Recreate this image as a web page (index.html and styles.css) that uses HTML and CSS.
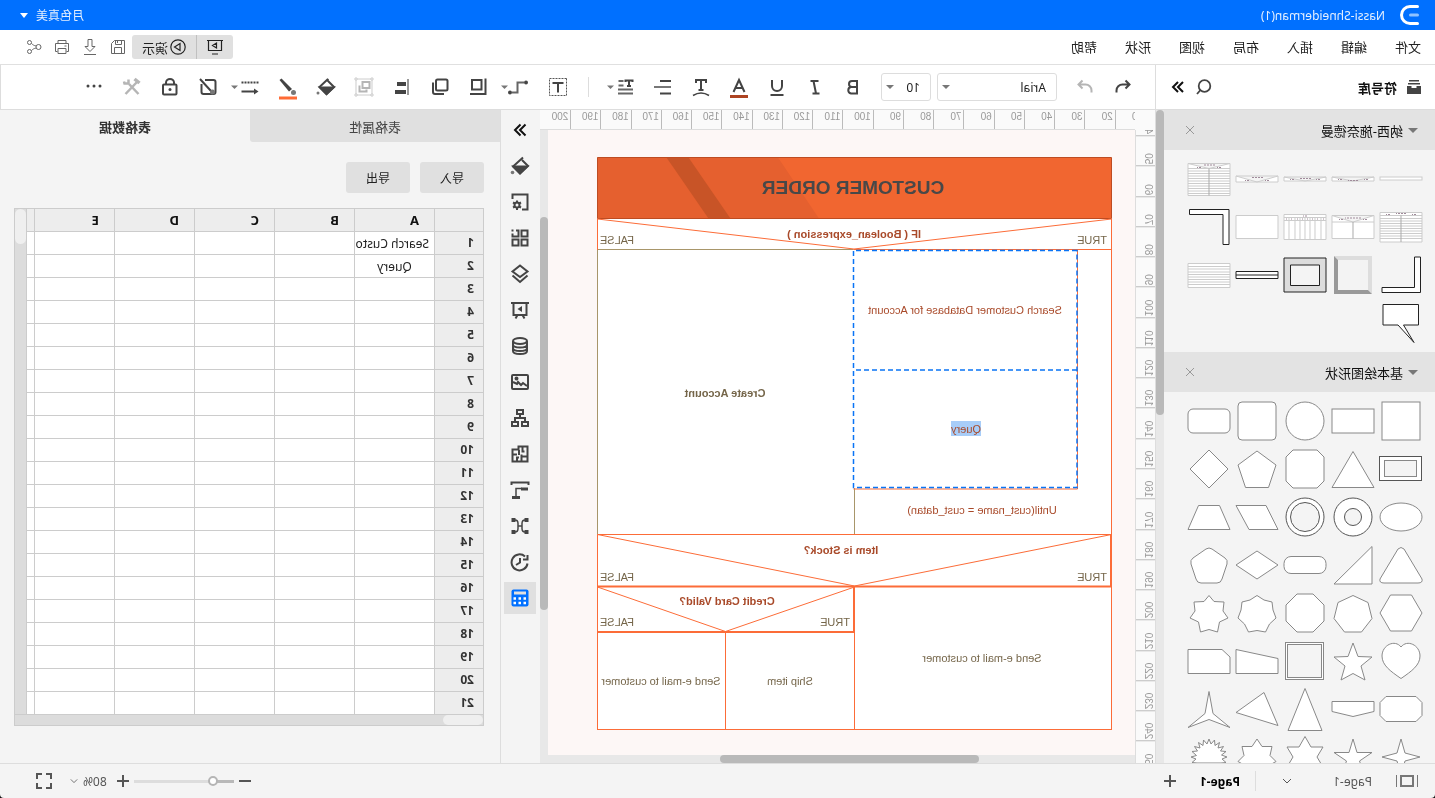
FILE: index.html
```html
<!DOCTYPE html>
<html lang="zh-CN">
<head>
<meta charset="utf-8">
<meta name="viewport" content="width=device-width, initial-scale=1">
<title>Nassi-Shneiderman(1)</title>
<link rel="stylesheet" href="styles.css">
</head>
<body>
<div class="app">
  <header class="titlebar">
    <svg class="logo" viewBox="0 0 20 22" width="20" height="22" fill="none" stroke="#fff" stroke-linecap="round"><path d="M2.500 2.500H10a8.500 8.500 0 0 1 0 17H2.500" stroke-width="3"/><path d="M2.500 11h7" stroke-width="3" stroke="#8fc2ff"/></svg>
    <span class="doc-title">Nassi-Shneiderman(1)</span>
    <button class="user" type="button">月色真美 <i class="caret"></i></button>
  </header>

  <nav class="menubar">
    <div class="menus">
      <button type="button">文件</button><button type="button">编辑</button><button type="button">插入</button><button type="button">布局</button><button type="button">视图</button><button type="button">形状</button><button type="button">帮助</button>
    </div>
    <div class="menu-right">
      <div class="present">
        <button type="button" aria-label="放映"><svg viewBox="0 0 18 16" width="18" height="16" fill="none" stroke="#222" stroke-width="1.2"><path d="M1 1.500h16M2.500 1.500v10h13v-10M6 15h6M7.500 4v5l4-2.500z"/></svg></button>
        <button type="button"><svg viewBox="0 0 16 16" width="16" height="16" fill="none" stroke="#222" stroke-width="1.200"><circle cx="8" cy="8" r="7.200"/><path d="M6 4.500v7l5.500-3.500z"/></svg>演示</button>
      </div>
      <button class="quick" type="button" aria-label="保存"><svg viewBox="0 0 16 16" width="16" height="16"><path d="M1.500 1.500h10l3 3v10h-13zM4.500 1.500v4h6v-4M8.500 2v2M4.500 14.500v-6h7v6"/></svg></button>
      <button class="quick" type="button" aria-label="下载"><svg viewBox="0 0 16 16" width="16" height="16"><path d="M6 .5h4v7h3l-5 5-5-5h3zM2 15.500h12"/></svg></button>
      <button class="quick" type="button" aria-label="打印"><svg viewBox="0 0 16 16" width="16" height="16"><path d="M4 4.500v-3h8v3M3.500 12.500h-2v-8h13v8h-2M4 9.500h8v5H4zM3.500 7h2"/></svg></button>
      <button class="quick" type="button" aria-label="分享"><svg viewBox="0 0 16 16" width="16" height="16"><circle cx="3.500" cy="8" r="2.500"/><circle cx="12.500" cy="3.500" r="2"/><circle cx="12.500" cy="12.500" r="2"/><path d="M6 7c2-.5 3-1 4.500-2.500M6 9c2 .5 3 1 4.500 2.500"/></svg></button>
    </div>
  </nav>

  <div class="toolbar">
    <div class="lib-head">
      <svg viewBox="0 0 14 14" width="14" height="14" fill="#444"><path d="M2 0h10v1.500H2zM1 3h12v1.500H1zM0 6h4.500v2h5V6H14v8H0z"/></svg>
      <strong>符号库</strong>
      <button class="plain" type="button" aria-label="搜索"><svg viewBox="0 0 16 16" width="16" height="16" fill="none" stroke="#444" stroke-width="1.800"><circle cx="7.500" cy="7" r="5.800"/><path d="M11.500 11l3.500 4"/></svg></button>
      <button class="plain" type="button" aria-label="收起"><svg viewBox="0 0 16 16" width="16" height="16" fill="none" stroke="#111" stroke-width="2"><path d="M3 3l5 5-5 5M8 3l5 5-5 5"/></svg></button>
    </div>
    <div class="tools">
      <button type="button" class="tool" aria-label="撤销"><svg viewBox="0 0 24 24" width="24" height="24"><path d="M9.500 5.500l-4 4 4 4M6 9.500h6.500a6 6 0 0 1 6 6v2"/></svg></button>
      <button type="button" class="tool off" aria-label="重做"><svg viewBox="0 0 24 24" width="24" height="24"><path d="M14.500 5.500l4 4-4 4M18 9.500h-6.500a6 6 0 0 0-6 6v2"/></svg></button>
      <label class="pick font"><select aria-label="字体"><option>Arial</option></select></label>
      <label class="pick size"><select aria-label="字号"><option>10</option></select></label>
      <button type="button" class="tool" aria-label="粗体"><svg viewBox="0 0 24 24" width="24" height="24"><path d="M8 6h5a3 3 0 0 1 0 6H8zM8 12h6a3.300 3.300 0 0 1 0 6.500H8z"/></svg></button>
      <button type="button" class="tool" aria-label="斜体"><svg viewBox="0 0 24 24" width="24" height="24"><path d="M8.500 6h8M7.500 18.500h7M13.500 6l-2.500 12.500"/></svg></button>
      <button type="button" class="tool" aria-label="下划线"><svg viewBox="0 0 24 24" width="24" height="24"><path d="M7 5v6a5 5 0 0 0 10 0V5M5.500 20h13"/></svg></button>
      <button type="button" class="tool" aria-label="字体颜色"><svg viewBox="0 0 24 24" width="24" height="24"><path d="M6.500 17L12 5l5.500 12M8.500 13h7"/><path d="M3 21.500h18" stroke="#ad4422" stroke-width="3"/></svg></button>
      <button type="button" class="tool" aria-label="文本路径"><svg viewBox="0 0 24 24" width="24" height="24"><path d="M7 8V5h10v3M12 5v10M9.500 15h5"/><path d="M4 20.500q8-5 16 0" stroke-width="1.500"/></svg></button>
      <button type="button" class="tool" aria-label="对齐"><svg viewBox="0 0 24 24" width="24" height="24"><path d="M4 6h11M4 18.500h11"/><path d="M4 12h17" stroke="#777"/></svg></button>
      <button type="button" class="tool wide" aria-label="行距"><svg viewBox="0 0 38 24" width="38" height="24"><path d="M11.500 7V5.500h7V7M15 5.500V11M13 11h4"/><path d="M20.500 6h5M20.500 10.500h5M11 14.500h15M11 18.500h15" stroke="#666" stroke-width="1.800"/><path class="drop" d="M30 10.500h7l-3.500 3.500z"/></svg></button>
      <span class="sep"></span>
      <button type="button" class="tool" aria-label="文本框"><svg viewBox="0 0 24 24" width="24" height="24"><path d="M3.500 3.500h17v17h-17z" stroke-width="1" stroke="#555" stroke-dasharray="2 1"/><path d="M6.500 8h11M12 8v9.500"/></svg></button>
      <button type="button" class="tool more" aria-label="连接线"><svg viewBox="0 0 38 24" width="38" height="24"><path d="M13 7.500h6.500v10H25" stroke="#666"/><circle cx="11" cy="7.500" r="2" class="fill blot"/><circle cx="27" cy="17.500" r="2" class="fill blot"/><path class="drop" d="M29 10.500h7l-3.500 3.500z"/></svg></button>
      <button type="button" class="tool" aria-label="排列"><svg viewBox="0 0 24 24" width="24" height="24"><path d="M8.500 5H18v9.500H8.500zM4.500 3.500v15.500H20"/></svg></button>
      <button type="button" class="tool" aria-label="层叠"><svg viewBox="0 0 24 24" width="24" height="24"><rect x="4.500" y="4.500" width="11.500" height="11" rx="1.500"/><path d="M19 7.500V17a2 2 0 0 1-2 2H8"/></svg></button>
      <button type="button" class="tool" aria-label="左对齐"><svg viewBox="0 0 24 24" width="24" height="24"><path d="M6 4v16" stroke="#777" stroke-width="1.500"/><path d="M8 7h9v4H8zM8 15h11v4H8z" class="fill blot"/></svg></button>
      <button type="button" class="tool off" aria-label="组合"><svg viewBox="0 0 24 24" width="24" height="24"><g stroke-width="1" stroke="#ccc"><path d="M4 4h16v16H4z"/><path d="M3 3h2v2H3zM19 3h2v2h-2zM3 19h2v2H3zM19 19h2v2h-2z" fill="#fff"/></g><path d="M6.500 7h7v6h-7zM16.500 10.500v6H9.500v-2"/></svg></button>
      <button type="button" class="tool" aria-label="填充"><svg viewBox="0 0 24 24" width="24" height="24"><path d="M10 4l8.500 8-7 7-7.500-7 6.500-6.500z"/><path d="M4.500 12.500h13.500l-6.500 6.500z" class="fill"/><circle cx="20" cy="18" r="1.500" fill="#777" stroke="none"/></svg></button>
      <button type="button" class="tool" aria-label="线条颜色"><svg viewBox="0 0 24 24" width="24" height="24"><path d="M18.500 3.500l2 1.500L11 16.500 8 14z" class="fill blot"/><circle cx="6.500" cy="17.500" r="2.500" fill="#777" stroke="none"/><path d="M3 23h18" stroke="#ff6b35" stroke-width="3"/></svg></button>
      <button type="button" class="tool more" aria-label="线型"><svg viewBox="0 0 38 24" width="38" height="24"><path d="M8.500 7.500h17" stroke-dasharray="2 1"/><path d="M11 16.500h14.500"/><path d="M8.500 16.500l4.500-3v6z" class="fill blot"/><path class="drop" d="M29 10.500h7l-3.500 3.500z"/></svg></button>
      <button type="button" class="tool" aria-label="无格式"><svg viewBox="0 0 24 24" width="24" height="24"><path d="M15 5H6.500A2 2 0 0 0 4.500 7v10a2 2 0 0 0 2 2h10a2 2 0 0 0 2-2V9M20 4L9 16"/><circle cx="7.500" cy="17" r="2.500" fill="#777" stroke="none"/></svg></button>
      <button type="button" class="tool" aria-label="锁定"><svg viewBox="0 0 24 24" width="24" height="24"><rect x="5.500" y="9.500" width="13.500" height="10" rx="1"/><path d="M8 9V7.500a4 3.500 0 0 1 8 0V9"/><circle cx="12" cy="14.500" r="1.500" class="fill blot"/></svg></button>
      <button type="button" class="tool off" aria-label="工具"><svg viewBox="0 0 24 24" width="24" height="24"><path d="M7 7l11.500 12" stroke-width="2.500"/><path d="M4.500 8L9.500 4" stroke-width="3.500"/><path d="M5.500 19L15 9" stroke-width="2.500"/><path d="M15.500 4.500v4h4l.5-2" stroke-width="2.500"/></svg></button>
      <button type="button" class="tool" aria-label="更多"><svg viewBox="0 0 24 24" width="24" height="24" class="dots"><circle cx="6" cy="11" r="1.500"/><circle cx="12" cy="11" r="1.500"/><circle cx="18" cy="11" r="1.500"/></svg></button>
    </div>
  </div>

  <main class="work">
    <aside class="library">
      <div class="lib-scroll">
        <section>
          <h2><i class="caret gray"></i>纳西-施奈德曼<button type="button" aria-label="关闭"><svg viewBox="0 0 10 10" width="10" height="10"><path d="M1 1l8 8M9 1L1 9"/></svg></button></h2>
          <div class="shapes nassi">
            <svg viewBox="-24 -24 48 48"><rect x="-21" y="-2" width="42" height="3"/></svg>
            <svg viewBox="-24 -24 48 48"><path d="M-21-2h42v4h-42zL0 2l21-4"/><path class="ink" d="M-15 0.500h4M11 0.500h4M-5 1.500h10"/></svg>
            <svg viewBox="-24 -24 48 48"><path d="M-21-2h42v4h-42zL0 2l21-4"/><path class="ink" d="M-15 0.500h4M11 0.500h4M-6-.5h12"/></svg>
            <svg viewBox="-24 -24 48 48"><path d="M-21-3h42v6h-42zL0 3l21-6"/><path class="ink" d="M-12 1.500h4M8 1.500h4M-6-1.500h12"/></svg>
            <svg viewBox="-24 -24 48 48"><path d="M-21-15.500h42v32h-42zL0-10.500l21-5M-21-10.500h42M-21-8h42M-21-5.500h42M-21-3h42M-21-.5h42M-21 2h42M-21 4.500h42M-21 7h42M-21 9.500h42M-21 12h42M-21 14.500h42"/><path class="mid" d="M0-10.500v27"/><path class="ink" d="M-12-11.500h4M8-11.500h4M-6-14h12"/></svg>
            <svg viewBox="-24 -24 48 48"><path d="M-21-14.500h42v29.500h-42zM-21-11.500h42M-21-8.500h42M-21-6h42M-21-3.500h42M-21-1h42M-21 1.500h42M-21 4h42M-21 6.500h42M-21 9h42M-21 11.500h42"/><path class="mid" d="M0-11.500v26.500"/><path class="ink" d="M-15-12.500h4M11-12.500h4M-5-13.500h10"/></svg>
            <svg viewBox="-24 -24 48 48"><path d="M-21-11.500h42v23h-42zL0-5l21-6.500M-21-5h42"/><path class="mid" d="M0-5v16.500"/><path class="ink" d="M-14-7.500h4M10-7.500h4M-8-9h16"/></svg>
            <svg viewBox="-24 -24 48 48"><path d="M-21-12.500h42v25h-42zM-21-9.500h42M-21-6.500h42M-16-9.500v22M-10-9.500v22M-5-9.500v22M0-9.500v22M5-9.500v22M10-9.500v22M16-9.500v22"/><path class="ink" d="M-2-11h4M-19-8h1M-13-8h1M-8-8h1M-3-8h1M2-8h1M7-8h1M13-8h1M18-8h1"/></svg>
            <svg viewBox="-24 -24 48 48"><path d="M-21-11.500h42v23h-42z"/></svg>
            <svg viewBox="-24 -24 48 48"><path class="dark" d="M19.500-17.500h-39.500v35h6v-30h33.500z"/></svg>
            <svg viewBox="-24 -24 48 48"><path class="dark" d="M-13.500-18h-6v35.500h38.500v-5h-32.500z"/></svg>
            <svg viewBox="-24 -24 48 48"><g stroke="none"><path d="M-19-19h38l-4 4h-30v30l-4 4z" fill="#ddd"/><path d="M19-19v38h-38l4-4h30v-30z" fill="#999"/><path d="M-15-15h30v30h-30z" fill="#f3f3f3"/></g></svg>
            <svg viewBox="-24 -24 48 48"><path class="dark frame" d="M-21-17h42v34h-42z"/><path class="dark pane" d="M-14.500-10h29v20.500h-29z"/></svg>
            <svg viewBox="-24 -24 48 48"><path class="dark" d="M-21-3.500h42v7h-42zM-21 0h42"/></svg>
            <svg viewBox="-24 -24 48 48"><path d="M-21-11.500h42v24h-42zM-21-8.500h42M-21-6h42M-21-3h42M-21-.5h42M-21 2h42M-21 4.500h42M-21 7h42M-21 9.500h42"/></svg>
            <svg viewBox="-24 -24 48 48"><path class="dark" d="M-17.500-18.500h35.500v20.500h-15l-16 17.500L-2.500 2h-15z"/></svg>
          </div>
        </section>
        <section>
          <h2><i class="caret gray"></i>基本绘图形状<button type="button" aria-label="关闭"><svg viewBox="0 0 10 10" width="10" height="10"><path d="M1 1l8 8M9 1L1 9"/></svg></button></h2>
          <div class="shapes">
            <svg viewBox="-24 -24 48 48"><rect x="-19" y="-19" width="38" height="38"/></svg>
            <svg viewBox="-24 -24 48 48"><rect x="-21" y="-12" width="42" height="24"/></svg>
            <svg viewBox="-24 -24 48 48"><circle r="19"/></svg>
            <svg viewBox="-24 -24 48 48"><rect x="-19" y="-19" width="38" height="38" rx="4"/></svg>
            <svg viewBox="-24 -24 48 48"><rect x="-21" y="-12" width="42" height="24" rx="5"/></svg>
            <svg viewBox="-24 -24 48 48"><rect class="dim" x="-20.500" y="-12.500" width="42" height="24"/><rect class="pane" x="-15.500" y="-8.500" width="32" height="16"/></svg>
            <svg viewBox="-24 -24 48 48"><path d="M0-17.500L21 18.500h-42z"/></svg>
            <svg viewBox="-24 -24 48 48"><path d="M-12-19h24l7 7v24l-7 7h-24l-7-7v-24z"/></svg>
            <svg viewBox="-24 -24 48 48"><path d="M0-18L19-4l-7.500 22.500h-23L-19-4z"/></svg>
            <svg viewBox="-24 -24 48 48"><path d="M0-19L19 0 0 19-19 0z"/></svg>
            <svg viewBox="-24 -24 48 48"><ellipse rx="21" ry="14"/></svg>
            <svg viewBox="-24 -24 48 48"><circle class="dim" r="19"/><circle class="dim pane" r="8.500"/></svg>
            <svg viewBox="-24 -24 48 48"><circle class="dim" r="19"/><circle class="dim pane" r="14.500"/></svg>
            <svg viewBox="-24 -24 48 48"><path d="M21-11.500H-9L-21 12.500H8z"/></svg>
            <svg viewBox="-24 -24 48 48"><path d="M-10.500-11.500h21L21 12.500h-42z"/></svg>
            <svg viewBox="-24 -24 48 48"><path d="M-3-16q3-3 6 0l18 30q1 4-4 4h-34q-5 0-4-4z"/></svg>
            <svg viewBox="-24 -24 48 48"><path d="M-19-18.500V19h38z"/></svg>
            <svg viewBox="-24 -24 48 48"><rect x="-21" y="-8.500" width="42" height="17" rx="7"/></svg>
            <svg viewBox="-24 -24 48 48"><path d="M0-14L21 0 0 14-21 0z"/></svg>
            <svg viewBox="-24 -24 48 48"><path d="M-3-16q3-2 6 0l13 9q3 2 2 6l-5 15q-1 4-5 4h-16q-4 0-5-4l-5-15q-1-4 2-6z"/></svg>
            <svg viewBox="-24 -24 48 48"><path d="M-21 0l10.500-18h21L21 0 10.500 18h-21z"/></svg>
            <svg viewBox="-24 -24 48 48"><path d="M0-17.500l15 7 4 16L8.500 19h-17L-19 5.500l4-16z"/></svg>
            <svg viewBox="-24 -24 48 48"><path d="M-8-19H8L19-8V8L8 19H-8L-19 8V-8z"/></svg>
            <svg viewBox="-24 -24 48 48"><path d="M0-17.500l7 4.500 8 2 1 8 3 8-6.500 6L8.500 19 0 17.500-8.500 19l-4-8L-19 5l3-8 1-8 8-2z"/></svg>
            <svg viewBox="-24 -24 48 48"><path d="M0-17.500l5 6 10 .5-1 9 5 7-8.500 4-2 10L0 16.500-8.500 19l-2-10L-19 5l5-7-1-9 10-.5z"/></svg>
            <svg viewBox="-24 -24 48 48"><path d="M0 17.500C-11 10-19 4-19-5-19-16-6-22 0-14 6-22 19-16 19-5 19 4 11 10 0 17.500z"/></svg>
            <svg viewBox="-24 -24 48 48"><path d="M0-18L5-4.500 19-4 8 5l4 14L0 12.500-12 19-8 5-19-4l14-.5z"/></svg>
            <svg viewBox="-24 -24 48 48"><rect x="-18.500" y="-18.500" width="38" height="37"/><rect class="pane" x="-16.500" y="-16.500" width="34" height="33"/></svg>
            <svg viewBox="-24 -24 48 48"><path d="M21-11.500L-21-2.500v15h42z"/></svg>
            <svg viewBox="-24 -24 48 48"><path d="M21-11.500H-13L-21-4v16.500h42z"/></svg>
            <svg viewBox="-24 -24 48 48"><path d="M-15-12.500h30l6 6v13l-6 6h-30l-6-6v-13z"/></svg>
            <svg viewBox="-24 -24 48 48"><path d="M-21-7.500h42v10L0 7.500-21 2.500z"/></svg>
            <svg viewBox="-24 -24 48 48"><path d="M0-20.500l17 42h-34z"/></svg>
            <svg viewBox="-24 -24 48 48"><path d="M-7-16.500L-21 16.500 21 3.500z"/></svg>
            <svg viewBox="-24 -24 48 48"><path d="M0-17.500L4 4.500l17 14L0 10.500-21 18.500l17-14z"/></svg>
            <svg viewBox="-24 -24 48 48"><path d="M0-18L4-4 19 0 4 4 0 18-4 4-19 0-4-4z"/></svg>
            <svg viewBox="-24 -24 48 48"><path d="M0-18L4-4.500h15L6.500 4l5 14L0 9.500-11.500 18l5-14L-19-4.500h15z"/></svg>
            <svg viewBox="-24 -24 48 48"><path d="M0-20.500L6-10h12L12 0l6 10H6L0 20.500-6 10h-12L-12 0l-6-10h12z"/></svg>
            <svg viewBox="-24 -24 48 48"><path d="M0-18l5 7.500h10l-2 9 6 6-9 5-2 9L0 15l-8 3.500-2-9-9-5 6-6-2-9h10z"/></svg>
            <svg viewBox="-24 -24 48 48"><path d="M0-18l2 5 3.500-4 .5 5.500 4.500-3-1.500 5.500 5.500-1.500-3 4.500 5.500.5-4.500 4L18 0l-5 2 4 3.500-5 .5-24 0-5-.5 4-3.500-5-2 5.500-2-4.500-3.500 5.500-.5-3-4.500 5.500 1.500-1.500-5.500 4.500 3 .5-5.500 3.500 4z"/></svg>
          </div>
        </section>
      </div>
      <div class="track lib-track"><span class="thumb"></span></div>
    </aside>

    <div class="stage">
      <div class="corner"></div>
      <div class="hruler"><div class="hticks"><span>10</span><span>20</span><span>30</span><span>40</span><span>50</span><span>60</span><span>70</span><span>80</span><span>90</span><span>100</span><span>110</span><span>120</span><span>130</span><span>140</span><span>150</span><span>160</span><span>170</span><span>180</span><span>190</span><span>200</span></div></div>
      <div class="vruler"><div class="vticks"><span>40</span><span>50</span><span>60</span><span>70</span><span>80</span><span>90</span><span>100</span><span>110</span><span>120</span><span>130</span><span>140</span><span>150</span><span>160</span><span>170</span><span>180</span><span>190</span><span>200</span><span>210</span><span>220</span><span>230</span><span>240</span><span>250</span></div></div>
      <div class="canvas">
        <svg class="diagram" viewBox="300 130 587 625" width="587" height="625">
          <path d="M323 157h515v573H323z" fill="#fff"/>
          <path d="M323.500 157.500h514v61h-514z" fill="#f16630"/>
          <path d="M657 157.500h180.500v61H616z" fill="#e5602f"/>
          <path d="M746.500 157.500h22l-42.500 61h-22z" transform="matrix(1 0 0 1 0 0)" fill="none"/>
          <path d="M746.500 157.500h22L726.500 218.500h-22z" fill="#c85427"/>
          <path d="M323.500 157.500h514v61h-514z" fill="none" stroke="#bd4c22"/>
          <g class="tan"><path d="M581.500 249.500h256v285M580.500 488v46"/></g>
          <g class="orange">
            <path d="M323.500 730V219L581 249l256.500-30v31M323.500 249.500h258M357.500 249.500v239.500h224"/>
            <path d="M323.500 534.500L580.500 586 837.500 534.500h-514M837.500 534.500v195.500M323.500 729.500h514M580.500 586v144M709.500 632v98M580.500 587L709.500 631.500 837.500 587"/>
            <path d="M324 534v52.500h514M581 587v45h257" stroke-width="2"/>
          </g>
          <path class="select-line" d="M358 250.500h223.500v237H358zM358 370h223.500"/>
          <rect x="454" y="421" width="30" height="15" fill="#a8cdf8"/>
          <g class="label">
            <text class="heading" x="582" y="194">CUSTOMER ORDER</text>
            <text class="rust bold" x="581" y="238">IF ( Boolean_expression )</text>
            <text x="343" y="244">TRUE</text><text x="818" y="244">FALSE</text>
            <text class="rust" x="470" y="314">Search Customer Database for Account</text>
            <text class="bold" x="710" y="397">Create Account</text>
            <text class="rust" x="469" y="433">Query</text>
            <text class="rust" x="453" y="514">Until(cust_name = cust_datan)</text>
            <text class="rust bold" x="594" y="554">Item is Stock?</text>
            <text x="343" y="581">TRUE</text><text x="818" y="581">FALSE</text>
            <text class="rust bold" x="708" y="605">Credit Card Valid?</text>
            <text x="600" y="626">TRUE</text><text x="818" y="626">FALSE</text>
            <text x="453" y="662">Send e-mail to customer</text>
            <text x="645" y="685">Ship item</text>
            <text x="774" y="685">Send e-mail to customer</text>
          </g>
        </svg>
      </div>
      <div class="track v-track"><span class="thumb"></span></div>
      <div class="track h-track"><span class="thumb"></span></div>
    </div>

    <nav class="strip">
      <button type="button" aria-label="展开"><svg viewBox="0 0 20 20" width="20" height="20"><path d="M4.500 4.500L10 10l-5.500 5.500M9.500 4.500L15 10l-5.500 5.500" stroke="#111"/></svg></button>
      <button type="button" aria-label="填充"><svg viewBox="0 0 20 20" width="20" height="20"><path d="M7 1.500l10 9-7 7-8-7.500 6-6"/><path d="M3 10.500h13.500L10 17z" class="fill"/><circle cx="17.500" cy="16.500" r="1.800" fill="#777" stroke="none"/></svg></button>
      <button type="button" aria-label="页面设置"><svg viewBox="0 0 20 20" width="20" height="20"><path d="M17.500 7V2.500h-15v15H8"/><circle cx="13" cy="13" r="2.500"/><path d="M13 8.500v2M13 15.500v2.500M9 10.500l2 1M17 10.500l-2 1M9 15.500l2-1M17 15.500l-2-1"/></svg></button>
      <button type="button" aria-label="组件"><svg viewBox="0 0 20 20" width="20" height="20"><path d="M2.500 2.500h6v6h-6zM2.500 11.500h6v6h-6zM11.500 11.500h6v6h-6zM14 2.500h-2.500v6h6v-3M16.500 2.500h2"/></svg></button>
      <button type="button" aria-label="图层"><svg viewBox="0 0 20 20" width="20" height="20"><path d="M10 1.500l7.500 6L10 13 2.500 7.500zM2.500 11.500L10 18l7.500-6.500"/></svg></button>
      <button type="button" aria-label="演示"><svg viewBox="0 0 20 20" width="20" height="20"><path d="M1 3h18M3.500 3v12h13V3M7.500 15l-2 3.500M12.500 15l2 3.500"/><path d="M8 6v6l4.500-3z" class="fill" stroke="none"/></svg></button>
      <button type="button" aria-label="数据"><svg viewBox="0 0 20 20" width="20" height="20"><ellipse cx="10" cy="5" rx="7" ry="3"/><path d="M3 5v10c0 4 14 4 14 0V5M3 8.500c0 4 14 4 14 0M3 12c0 4 14 4 14 0"/></svg></button>
      <button type="button" aria-label="图片"><svg viewBox="0 0 20 20" width="20" height="20"><rect x="2" y="3" width="16" height="14" rx="1"/><path d="M3 14l4-3 2 2 3-3 1 2 4-2"/><circle cx="13.500" cy="6.500" r="1" class="fill"/></svg></button>
      <button type="button" aria-label="组织结构"><svg viewBox="0 0 20 20" width="20" height="20"><path d="M7 2h6v4H7zM2 14h6v4H2zM12 14h6v4h-6zM10 6v4M5 14v-4h10v4"/></svg></button>
      <button type="button" aria-label="平面图"><svg viewBox="0 0 20 20" width="20" height="20"><path d="M2.500 2.500h9v3h6v12h-15zM7.500 2.500v5h-2M11 6v5M17 10.500h-4M2.500 12.500h6v-2M8.500 12.500v5M13 17.500v-4h-2"/></svg></button>
      <button type="button" aria-label="线路"><svg viewBox="0 0 20 20" width="20" height="20"><path d="M1.500 5V2.500h17V5"/><path d="M2 9h7M10 17.500h8" stroke-width="3"/><path d="M8 8.500h6v8" stroke-width="1.500"/></svg></button>
      <button type="button" aria-label="思维导图"><svg viewBox="0 0 20 20" width="20" height="20"><path d="M1.500 4h4M1.500 16h4M14.500 4h4M14.500 16h4" stroke-width="4"/><path d="M5 4q3 0 3 3.500v5q0 3.500-3 3.500M15 4q-3 0-3 3.500v5q0 3.500 3 3.500M8 10h4" stroke-width="1.500"/></svg></button>
      <button type="button" aria-label="历史"><svg viewBox="0 0 20 20" width="20" height="20"><path d="M2.500 11.500A8 8 0 1 0 5 4.500M2.500 3v4.500h4.500M10 6v4.500l4 2.500"/></svg></button>
      <button type="button" class="active" aria-label="表格"><svg viewBox="0 0 20 20" width="20" height="20"><rect x="1.500" y="1.500" width="17" height="17" rx="2" fill="#0070ff" stroke="none"/><path d="M4 5h12" stroke="#e0e0e0" stroke-width="3"/><path d="M4 10.500h2.500M9 10.500h2.500M14 10.500h2.500M4 15h2.500M9 15h2.500M14 15h2.500" stroke="#fff" stroke-width="2.500"/></svg></button>
    </nav>

    <aside class="data-panel">
      <div class="tabs"><button type="button">表格属性</button><button type="button" class="current">表格数据</button></div>
      <div class="actions"><button type="button">导入</button><button type="button">导出</button></div>
      <div class="sheet">
        <div class="cells">
          <table>
            <thead><tr><th class="num"></th><th>A</th><th>B</th><th>C</th><th>D</th><th>E</th><th></th></tr></thead>
            <tbody>
              <tr><th>1</th><td>Search Customer Database for Account</td><td></td><td></td><td></td><td></td><td></td></tr>
              <tr><th>2</th><td>Query</td><td></td><td></td><td></td><td></td><td></td></tr>
              <tr><th>3</th><td></td><td></td><td></td><td></td><td></td><td></td></tr>
              <tr><th>4</th><td></td><td></td><td></td><td></td><td></td><td></td></tr>
              <tr><th>5</th><td></td><td></td><td></td><td></td><td></td><td></td></tr>
              <tr><th>6</th><td></td><td></td><td></td><td></td><td></td><td></td></tr>
              <tr><th>7</th><td></td><td></td><td></td><td></td><td></td><td></td></tr>
              <tr><th>8</th><td></td><td></td><td></td><td></td><td></td><td></td></tr>
              <tr><th>9</th><td></td><td></td><td></td><td></td><td></td><td></td></tr>
              <tr><th>10</th><td></td><td></td><td></td><td></td><td></td><td></td></tr>
              <tr><th>11</th><td></td><td></td><td></td><td></td><td></td><td></td></tr>
              <tr><th>12</th><td></td><td></td><td></td><td></td><td></td><td></td></tr>
              <tr><th>13</th><td></td><td></td><td></td><td></td><td></td><td></td></tr>
              <tr><th>14</th><td></td><td></td><td></td><td></td><td></td><td></td></tr>
              <tr><th>15</th><td></td><td></td><td></td><td></td><td></td><td></td></tr>
              <tr><th>16</th><td></td><td></td><td></td><td></td><td></td><td></td></tr>
              <tr><th>17</th><td></td><td></td><td></td><td></td><td></td><td></td></tr>
              <tr><th>18</th><td></td><td></td><td></td><td></td><td></td><td></td></tr>
              <tr><th>19</th><td></td><td></td><td></td><td></td><td></td><td></td></tr>
              <tr><th>20</th><td></td><td></td><td></td><td></td><td></td><td></td></tr>
              <tr><th>21</th><td></td><td></td><td></td><td></td><td></td><td></td></tr>
            </tbody>
          </table>
        </div>
        <div class="bar bar-v"><span></span></div>
        <div class="bar bar-h"><span></span></div>
      </div>
    </aside>
  </main>

  <footer class="status">
    <div class="pages">
      <svg viewBox="0 0 22 14" width="22" height="14" fill="none" stroke="#777"><path d="M5 2h12v10H5z" stroke-width="2"/><path d="M.5 1v12M21.500 1v12"/></svg>
      <button type="button" class="page-pick"><span>Page-1</span><svg viewBox="0 0 10 10" width="10" height="10"><path d="M1 3l4 4 4-4"/></svg></button>
      <button type="button" class="page-tab">Page-1</button>
      <button type="button" aria-label="新增页面"><svg class="plus" viewBox="0 0 12 12" width="12" height="12"><path d="M0 6h12M6 0v12"/></svg></button>
    </div>
    <div class="zoom">
      <button type="button" aria-label="缩小"><svg class="plus" viewBox="0 0 12 12" width="12" height="12"><path d="M0 6h12"/></svg></button>
      <input type="range" min="0" max="100" value="17" aria-label="缩放">
      <button type="button" aria-label="放大"><svg class="plus" viewBox="0 0 12 12" width="12" height="12"><path d="M0 6h12M6 0v12"/></svg></button>
      <button type="button" class="percent">80%<svg viewBox="0 0 10 10" width="8" height="8"><path d="M1 3l4 4 4-4"/></svg></button>
      <button type="button" aria-label="全屏"><svg viewBox="0 0 16 16" width="16" height="16"><path class="thick" d="M1 6V1h5M10 1h5v5M15 10v5h-5M6 15H1v-5"/></svg></button>
    </div>
  </footer>
</div>
</body>
</html>
```
FILE: styles.css
```css
* { box-sizing: border-box; }

html { background: #111; }

body {
  margin: 0;
  color: #222;
  font-family: "Noto Sans", "Noto Sans CJK SC", sans-serif;
  font-size: 13px;
}

button {
  padding: 0;
  border: 0;
  background: none;
  color: inherit;
  font: inherit;
}

svg { display: block; }

/* The whole window is shown flipped, as in a mirror. */
.app {
  display: grid;
  grid-template-rows: 30px 35px 45px minmax(0, 1fr) 35px;
  height: 100vh;
  overflow: hidden;
  border-radius: 0 0 4px 4px;
  background: #f4f4f4;
  transform: scaleX(-1);
}

.caret {
  display: inline-block;
  border: 4px solid transparent;
  border-top: 5px solid currentColor;
  border-bottom: 0;
}
.caret.gray { border-width: 5px 5px 0; color: #777; }

/* Title bar */
.titlebar {
  display: flex;
  align-items: center;
  padding: 0 20px 0 15px;
  background: #0070ff;
  color: #e3efff;
  font-size: 12px;
}
.doc-title { margin-left: 15px; }
.user { display: flex; align-items: center; gap: 8px; margin-left: auto; }
.user .caret { color: #fff; }

/* Menu bar */
.menubar {
  display: flex;
  align-items: center;
  justify-content: space-between;
  padding: 0 26px 0 14px;
  border-bottom: 1px solid #e0e0e0;
  background: #fff;
}
.menus { display: flex; gap: 28px; padding-bottom: 2px; }
.menu-right { display: flex; align-items: center; gap: 12px; }
.present {
  display: flex;
  height: 24px;
  margin-right: -6px;
  overflow: hidden;
  border-radius: 3px;
  background: #e0e0e0;
}
.present button { display: flex; align-items: center; justify-content: center; gap: 2px; width: 64px; }
.present button:first-child { width: 37px; border-right: 1px solid #c0c0c0; }
.quick svg { fill: none; stroke: #666; }

/* Tool bar */
.toolbar {
  display: grid;
  grid-template-columns: 280px 1fr;
  border-bottom: 1px solid #ddd;
  background: #fff;
}
.lib-head {
  display: flex;
  align-items: center;
  padding: 0 14px;
  border-right: 1px solid #ddd;
}
.lib-head strong { flex: 1; margin-left: 10px; color: #111; }
.lib-head .plain { margin-left: 10px; }
.tools { display: flex; align-items: center; padding-left: 13px; border-right: 1px solid #ddd; }
.tool { display: flex; flex: none; align-items: center; justify-content: center; width: 38px; height: 38px; }
.tool.more { width: 42px; }
.tool svg { overflow: visible; fill: none; stroke: #444; stroke-width: 2; }
.tool.off svg { stroke: #b5b5b5; }
.tool .fill, .strip .fill { fill: #444; }
.tool .blot { stroke: none; }
.tool svg.dots { fill: #444; stroke: none; }
.tool .drop { fill: #777; stroke: none; }
.sep { width: 1px; height: 20px; margin: 0 11px 0 17px; background: #ddd; }
.pick { position: relative; flex: none; height: 28px; }
.pick select {
  width: 100%;
  height: 100%;
  padding: 0 0 0 10px;
  border: 1px solid #ddd;
  border-radius: 3px;
  background: #fff;
  color: #222;
  font: inherit;
  font-size: 12px;
  appearance: none;
}
.pick::after {
  position: absolute;
  top: 12px;
  right: 5px;
  border: 4px solid transparent;
  border-top: 4px solid #777;
  border-bottom: 0;
  content: "";
}
.pick.font { width: 120px; margin-left: 9px; }
.pick.size { width: 50px; margin: 0 9px 0 6px; }

/* Work area */
.work {
  display: grid;
  grid-template-columns: 280px minmax(0, 1fr) 40px 500px;
  min-height: 0;
}

.track { background: #e8e8e8; }
.track .thumb { display: block; border-radius: 4px; background: #b9b9b9; }

.library {
  display: grid;
  grid-template-columns: 1fr 8px;
  min-height: 0;
  border-right: 1px solid #ddd;
}
.lib-scroll { overflow: hidden; }
.lib-track .thumb { height: 305px; }
.library h2 {
  display: flex;
  align-items: center;
  height: 40px;
  margin: 0;
  padding: 0 21px 0 17px;
  background: #e3e3e3;
  color: #111;
  font-size: 13px;
  font-weight: 400;
}
.library h2 .caret { margin-right: 5px; }
.library h2 button { margin-left: auto; }
.library h2 svg { fill: none; stroke: #999; }
.shapes { display: grid; grid-template-columns: repeat(5, 48px); padding: 5px 10px; }
.shapes svg { width: 48px; height: 48px; fill: #fff; stroke: #888; }
.shapes.nassi svg { stroke: #ccc; }
.shapes .mid { stroke: #aaa; }
.shapes .ink { stroke: #a08a9a; stroke-dasharray: 2 1; }
.shapes .dark { stroke: #222; }
.shapes .dim { stroke: #555; }
.shapes .pane { fill: #f4f4f4; }
.shapes .frame { fill: #dcdcdc; }

.stage {
  display: grid;
  grid-template-columns: 20px minmax(0, 1fr) 8px;
  grid-template-rows: 20px minmax(0, 1fr) 8px;
  min-height: 0;
  background: #fafafa;
}
.hruler, .vruler {
  overflow: hidden;
  color: #999;
  font-family: "Liberation Sans", sans-serif;
  font-size: 10px;
}
.hruler { grid-column: 2 / 4; border-bottom: 1px solid #ddd; }
.hticks { display: grid; grid-template-columns: repeat(20, 1fr); width: 605px; height: 100%; margin-left: -11px; }
.hticks span { padding-left: 2px; border-left: 1px solid #bbb; line-height: 14px; }
.vruler { grid-row: 2 / 4; border-right: 1px solid #ddd; }
.vticks { display: grid; grid-template-rows: repeat(22, 1fr); width: 100%; height: 666px; margin-top: -24px; }
.vticks span {
  padding-top: 1px;
  border-top: 1px solid #bbb;
  line-height: 13px;
  writing-mode: vertical-rl;
  transform: rotate(180deg);
}
.canvas { overflow: hidden; background: #fdf7f6; }
.v-track { padding-top: 87px; }
.v-track .thumb { height: 393px; }
.h-track { grid-column: 2 / 4; padding-left: 156px; }
.h-track .thumb { width: 259px; height: 8px; }

/* Diagram */
.diagram .tan { fill: none; stroke: #a8966a; }
.diagram .orange { fill: none; stroke: #fc6c38; }
.diagram .select-line { fill: none; stroke: #0a74f5; stroke-width: 1.500; stroke-dasharray: 5 3; }
.label { fill: #75664a; font-family: "Liberation Sans", sans-serif; font-size: 11px; text-anchor: middle; }
.label .rust { fill: #a94a2a; }
.label .bold { font-weight: 700; }
.label .heading { fill: #484848; font-size: 19px; font-weight: 700; }

/* Icon strip */
.strip {
  display: flex;
  flex-direction: column;
  align-items: center;
  gap: 4px;
  padding-top: 4px;
  border-right: 1px solid #ddd;
}
.strip button { display: grid; place-items: center; width: 32px; height: 32px; }
.strip svg { fill: none; stroke: #444; stroke-width: 2; }
.strip .active { background: #e0e0e0; }

/* Data panel */
.tabs { display: grid; grid-template-columns: 1fr 1fr; height: 32px; color: #444; }
.tabs button { background: #e0e0e0; border-radius: 0 0 3px 0; }
.tabs .current { background: none; color: #333; font-weight: 700; }
.actions { display: flex; gap: 10px; padding: 20px 16px 15px; }
.actions button { width: 64px; height: 31px; border-radius: 3px; background: #e0e0e0; font-size: 12px; }
.sheet {
  display: grid;
  grid-template-columns: minmax(0, 1fr) 12px;
  margin: 0 14px 0 16px;
  border: 1px solid #ccc;
}
.cells { overflow: hidden; background: #fff; }
.cells table { width: 529px; border-spacing: 0; table-layout: fixed; }
.cells th, .cells td {
  height: 23px;
  padding: 0 5px;
  overflow: hidden;
  border-right: 1px solid #ccc;
  border-bottom: 1px solid #ccc;
  line-height: 20px;
  white-space: nowrap;
}
.cells td { padding-top: 1px; color: #222; font-size: 12px; text-align: center; }
.cells th { padding: 0 0 0 15px; background: #ededed; color: #111; font-size: 13px; text-align: left; }
.cells .num { width: 49px; }
.cells tbody th { padding-left: 9px; color: #333; font-size: 12px; }
.cells tbody tr:last-child > * { border-bottom: 0; height: 22px; }
.bar { background: #dcdcdc; }
.bar span { display: block; border-radius: 6px; background: #efefef; }
.bar-v { border-left: 1px solid #ccc; }
.bar-v span { height: 35px; }
.bar-h { grid-column: 1 / 3; border-top: 1px solid #ccc; }
.bar-h span { width: 40px; height: 10px; }

/* Status bar */
.status {
  display: flex;
  align-items: center;
  justify-content: space-between;
  padding: 0 36px 0 17px;
  border-top: 1px solid #ddd;
  color: #555;
  font-size: 12px;
}
.status button svg { fill: none; stroke: #555; }
.status button .plus, .status .thick { stroke-width: 2; }
.pages, .zoom { display: flex; align-items: center; }
.page-pick {
  display: flex;
  align-items: center;
  justify-content: space-between;
  width: 90px;
  margin: 0 26px 0 24px;
}
.page-tab {
  height: 20px;
  padding: 0 24px 0 15px;
  border-left: 1px solid #ddd;
  color: #000;
  font-weight: 700;
}
.zoom input {
  width: 100px;
  height: 10px;
  margin: 0 5px;
  background: linear-gradient(90deg, #b9b9b9 20%, #ddd 20%) center / 100% 3px no-repeat;
  appearance: none;
}
.zoom input::-webkit-slider-thumb {
  width: 10px;
  height: 10px;
  border: 2px solid #b5b5b5;
  border-radius: 50%;
  background: #fff;
  appearance: none;
}
.percent { display: flex; align-items: center; gap: 5px; margin: 0 18px 0 10px; }
```
